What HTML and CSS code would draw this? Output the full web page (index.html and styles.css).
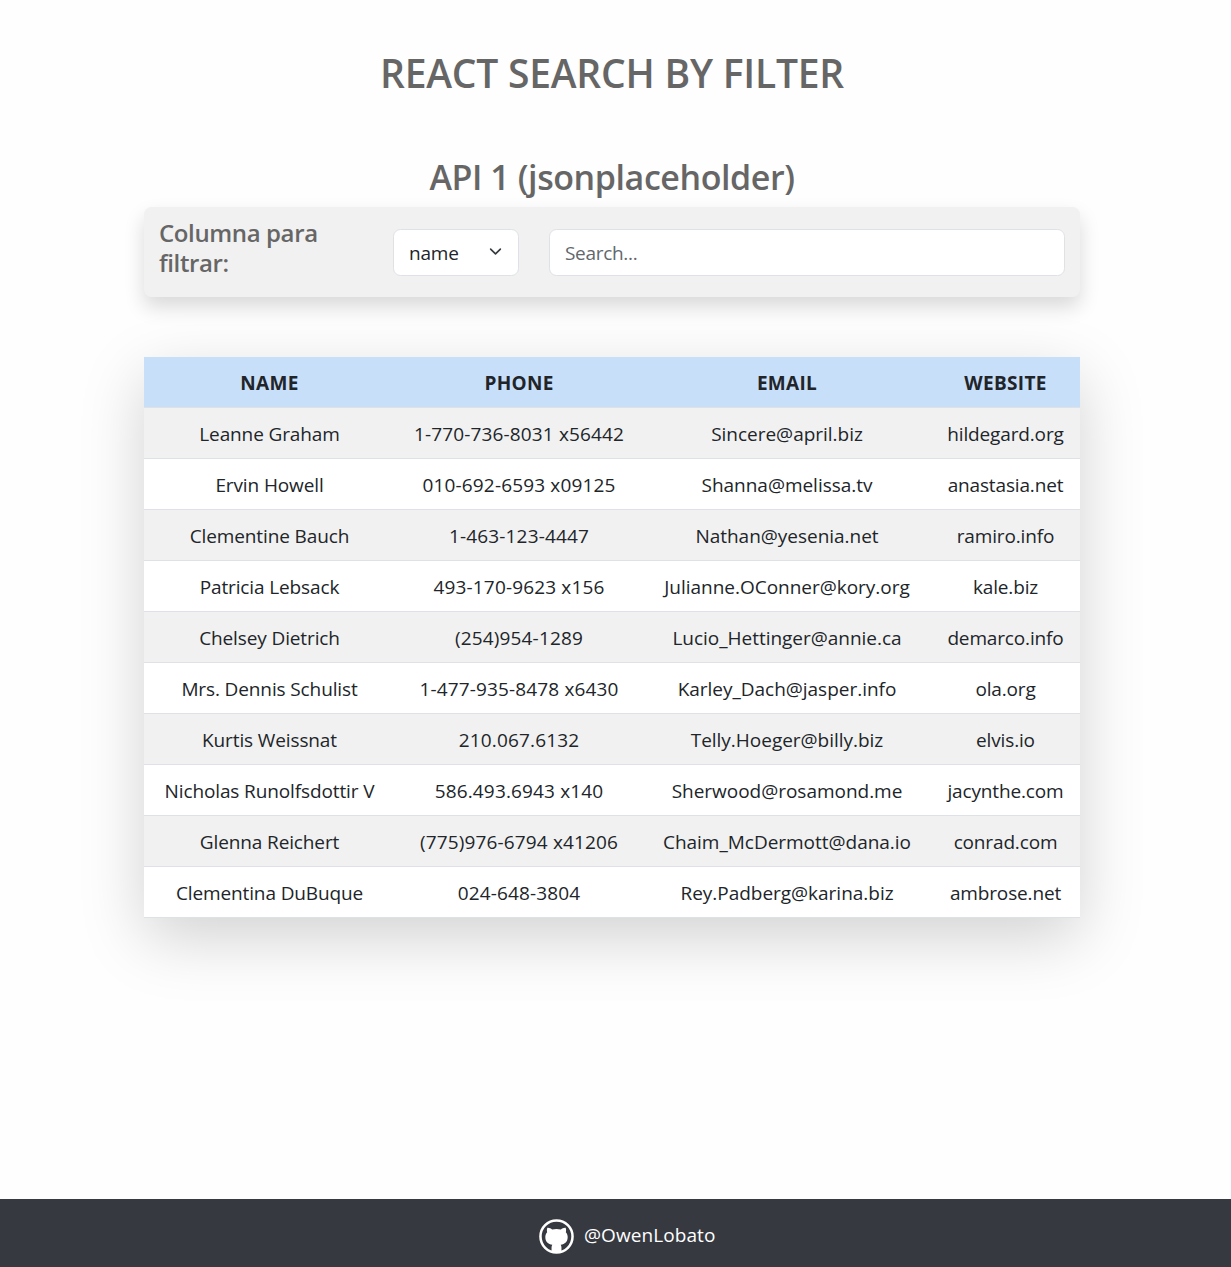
FILE: index.html
```html
<!DOCTYPE html>
<html lang="es">
<head>
<meta charset="utf-8">
<title>React Search by Filter</title>
<link rel="stylesheet" href="styles.css">
</head>
<body>
<main class="container">
  <h1 class="title">REACT SEARCH BY FILTER</h1>
  <h2 class="subtitle">API 1 (jsonplaceholder)</h2>
  <section class="filter">
    <h3 class="filter-label">Columna para<br>filtrar:</h3>
    <div class="select"><span>name</span>
      <svg class="chevron" viewBox="0 0 16 16"><path d="m2 5 6 6 6-6"/></svg>
    </div>
    <input class="search" type="text" placeholder="Search...">
  </section>
  <table class="table">
    <colgroup><col class="col-name"><col class="col-phone"><col class="col-email"><col class="col-site"></colgroup>
    <thead><tr><th>NAME</th><th>PHONE</th><th>EMAIL</th><th>WEBSITE</th></tr></thead>
    <tbody>
      <tr><td>Leanne Graham</td><td>1-770-736-8031 x56442</td><td>Sincere@april.biz</td><td>hildegard.org</td></tr>
      <tr><td>Ervin Howell</td><td>010-692-6593 x09125</td><td>Shanna@melissa.tv</td><td>anastasia.net</td></tr>
      <tr><td>Clementine Bauch</td><td>1-463-123-4447</td><td>Nathan@yesenia.net</td><td>ramiro.info</td></tr>
      <tr><td>Patricia Lebsack</td><td>493-170-9623 x156</td><td>Julianne.OConner@kory.org</td><td>kale.biz</td></tr>
      <tr><td>Chelsey Dietrich</td><td>(254)954-1289</td><td>Lucio_Hettinger@annie.ca</td><td>demarco.info</td></tr>
      <tr><td>Mrs. Dennis Schulist</td><td>1-477-935-8478 x6430</td><td>Karley_Dach@jasper.info</td><td>ola.org</td></tr>
      <tr><td>Kurtis Weissnat</td><td>210.067.6132</td><td>Telly.Hoeger@billy.biz</td><td>elvis.io</td></tr>
      <tr><td>Nicholas Runolfsdottir V</td><td>586.493.6943 x140</td><td>Sherwood@rosamond.me</td><td>jacynthe.com</td></tr>
      <tr><td>Glenna Reichert</td><td>(775)976-6794 x41206</td><td>Chaim_McDermott@dana.io</td><td>conrad.com</td></tr>
      <tr><td>Clementina DuBuque</td><td>024-648-3804</td><td>Rey.Padberg@karina.biz</td><td>ambrose.net</td></tr>
    </tbody>
  </table>
</main>
<footer class="footer">
  <svg class="github" viewBox="0 0 36 36">
    <circle cx="18" cy="18" r="16.5" fill="none" stroke="#fff" stroke-width="2.6"/>
    <path fill="#fff" d="M8.600 9c1.600-.3 3.500.6 4.900 1.700 2.900-.7 6.100-.7 9 0C23.900 9.600 25.800 8.700 27.400 9c.6 1.600.6 3.100.2 4.500 1.300 1.500 1.900 3.100 1.900 5.100 0 5-2.900 7.300-7.200 8 .5.700.8 1.600.8 2.800V34H12.900v-4.600c0-1.200.3-2.100.8-2.800-4.300-.7-7.200-3-7.200-8 0-2 .6-3.600 1.900-5.100C8 12.100 8 10.600 8.600 9Z"/>
  </svg>
  <span class="handle">@OwenLobato</span>
</footer>
</body>
</html>
```

FILE: styles.css
```css
* { box-sizing: border-box; }
html { font-size: 20px; }
body {
  margin: 0;
  min-height: 1267px;
  display: flex;
  flex-direction: column;
  background: #fefefe;
  color: #212529;
  font: 400 19px/30px "Open Sans", "Noto Sans", sans-serif;
  letter-spacing: -0.2px;
}
.container { width: 936px; margin-left: 144px; flex: 1; }
h1, h2, h3 { margin: 0; color: #666; font-weight: 600; text-align: center; }
.title { padding-top: 49px; font-size: 39px; line-height: 48px; letter-spacing: -0.22px; }
.subtitle { padding-top: 59px; font-size: 34px; line-height: 42px; letter-spacing: -0.42px; }
.filter {
  display: flex;
  align-items: flex-start;
  height: 90px;
  margin-top: 9px;
  padding: 0 15px;
  background: #f1f1f1;
  border-radius: 7.5px;
  box-shadow: 0 .5rem 1rem rgba(0, 0, 0, .15);
}
.filter-label { width: 234px; padding-top: 11px; text-align: left; font-size: 24px; line-height: 30px; letter-spacing: -0.38px; }
.select, .search {
  height: 47px;
  margin-top: 22px;
  padding: 0 15px;
  background: #fff;
  border: 1px solid #dee2e6;
  border-radius: 7.5px;
}
.select { width: 126px; display: flex; align-items: center; justify-content: space-between; }
.chevron { width: 13px; height: 13px; margin: -2px 1px 0 0; fill: none; stroke: #343a40; stroke-width: 2; stroke-linecap: round; stroke-linejoin: round; }
.search { width: 516px; margin-left: 30px; font: inherit; letter-spacing: -0.3px; color: inherit; }
.search::placeholder { color: #62676c; opacity: 1; }
.table {
  width: 936px;
  margin-top: 60px;
  table-layout: fixed;
  border-collapse: separate;
  border-spacing: 0;
  text-align: center;
  box-shadow: 0 1rem 3rem rgba(0, 0, 0, .175);
}
.col-name { width: 251px; }
.col-phone { width: 248px; }
.col-email { width: 288px; }
.col-site { width: 149px; }
th, td { height: 51px; padding: 2px 0 0; border-bottom: 1px solid #dee2e6; background: #fff; white-space: nowrap; }
th { background: #c8dffa; font-weight: 700; letter-spacing: 0.3px; }
td:nth-child(1) { letter-spacing: -0.12px; }
td:nth-child(2) { letter-spacing: 0.15px; }
td:nth-child(3) { letter-spacing: -0.02px; }
td:nth-child(4) { letter-spacing: -0.15px; }
tbody tr:nth-child(odd) td { background: #f1f1f1; }
.footer {
  height: 68px;
  display: flex;
  align-items: center;
  padding: 6px 0 0 539px;
  background: #363940;
  color: #fff;
  letter-spacing: 0.08px;
}
.github { width: 35px; height: 35px; margin-right: 10px; }
.handle { margin-top: -2px; }
```
